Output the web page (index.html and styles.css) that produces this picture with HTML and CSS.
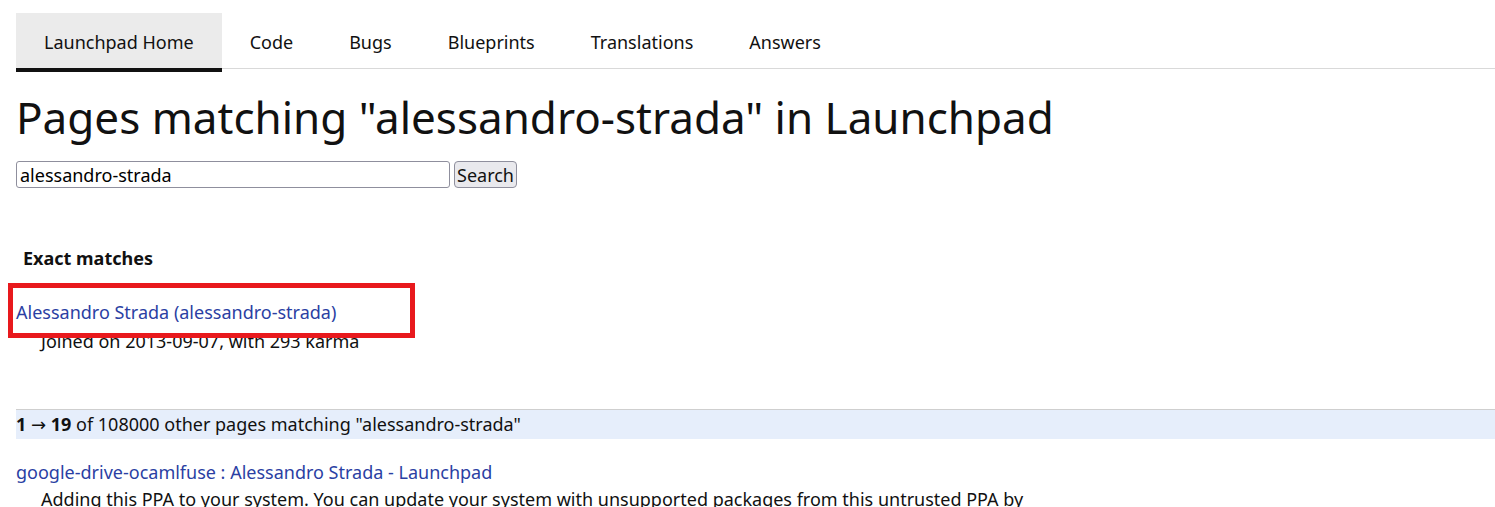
FILE: index.html
```html
<!DOCTYPE html>
<html lang="en">
<head>
  <meta charset="UTF-8" />
  <title>Pages matching "alessandro-strada" in Launchpad</title>
  <meta name="viewport" content="width=device-width, initial-scale=1.0" />
  <link rel="stylesheet" href="styles.css">
</head>
<body>
  <div class="page">
    <nav class="tabs">
      <a class="tab active" href="#">Launchpad Home</a>
      <a class="tab" href="#">Code</a>
      <a class="tab" href="#">Bugs</a>
      <a class="tab" href="#">Blueprints</a>
      <a class="tab" href="#">Translations</a>
      <a class="tab" href="#">Answers</a>
    </nav>

    <h1>Pages matching "alessandro-strada" in Launchpad</h1>

    <form class="search">
      <input type="text" name="text" value="alessandro-strada">
      <button type="submit">Search</button>
    </form>

    <section class="exact">
      <h3>Exact matches</h3>
      <div class="match">
        <a href="#">Alessandro Strada (alessandro-strada)</a>
        <span class="highlight"></span>
      </div>
      <p class="summary">Joined on 2013-09-07, with 293 karma</p>
    </section>

    <div class="batch">
      <strong>1</strong> &rarr; <strong>19</strong> of 108000 other pages matching "alessandro-strada"
    </div>

    <ul class="results">
      <li>
        <a href="#">google-drive-ocamlfuse : Alessandro Strada - Launchpad</a>
        <p class="summary">Adding this PPA to your system. You can update your system with unsupported packages from this untrusted PPA by</p>
      </li>
    </ul>
  </div>
</body>
</html>
```

FILE: styles.css
```css
* { box-sizing: border-box; }

html, body {
  margin: 0;
  padding: 0;
  background: white;
  color: #111;
  font-family: "Noto Sans", "DejaVu Sans", sans-serif;
  font-size: 18px;
  overflow: hidden;
}

.page {
  padding: 13px 0 0 16px;
}

a { color: #2b3fa3; text-decoration: none; }

/* top navigation */
.tabs {
  display: flex;
  height: 56px;
  border-bottom: 1px solid #d9d9d9;
}

.tab {
  display: block;
  height: 59px;
  margin-bottom: -4px;
  padding: 2px 28px 0;
  line-height: 55px;
  color: #111;
  border-bottom: 4px solid transparent;
}

.tab.active {
  background: #ebebeb;
  border-bottom-color: #111;
}

h1 {
  margin: 20px 0 0;
  font-size: 44px;
  font-weight: 400;
  line-height: 56px;
}

.search {
  display: flex;
  gap: 4px;
  margin-top: 16px;
}

.search input {
  width: 434px;
  height: 27px;
  padding: 0 3px;
  font: inherit;
  font-size: 18px;
  border: 1px solid #8f8f9d;
  border-radius: 3px;
}

.search button {
  height: 27px;
  padding: 0 2px;
  font: inherit;
  font-size: 18px;
  background: #e9e9ed;
  border: 1px solid #8f8f9d;
  border-radius: 4px;
  color: #111;
}

.exact {
  margin-top: 57px;
}

.exact h3 {
  margin: 0 0 0 7px;
  font-size: 18px;
  line-height: 26px;
}

.match {
  position: relative;
  margin-top: 28px;
  line-height: 26px;
}

/* red outline drawn over the exact hit */
.highlight {
  position: absolute;
  left: -8px;
  top: -16px;
  width: 407px;
  height: 55px;
  border: 5px solid #e8191d;
  pointer-events: none;
}

.summary {
  margin: 3px 0 0 25px;
  line-height: 26px;
}

.batch {
  margin-top: 55px;
  height: 30px;
  line-height: 29px;
  background: #e6eefb;
  border-top: 1px solid #cfcfcf;
}

.results {
  list-style: none;
  margin: 20px 0 0;
  padding: 0;
}

.results li { line-height: 26px; }

.results .summary { margin-top: 1px; }
```
